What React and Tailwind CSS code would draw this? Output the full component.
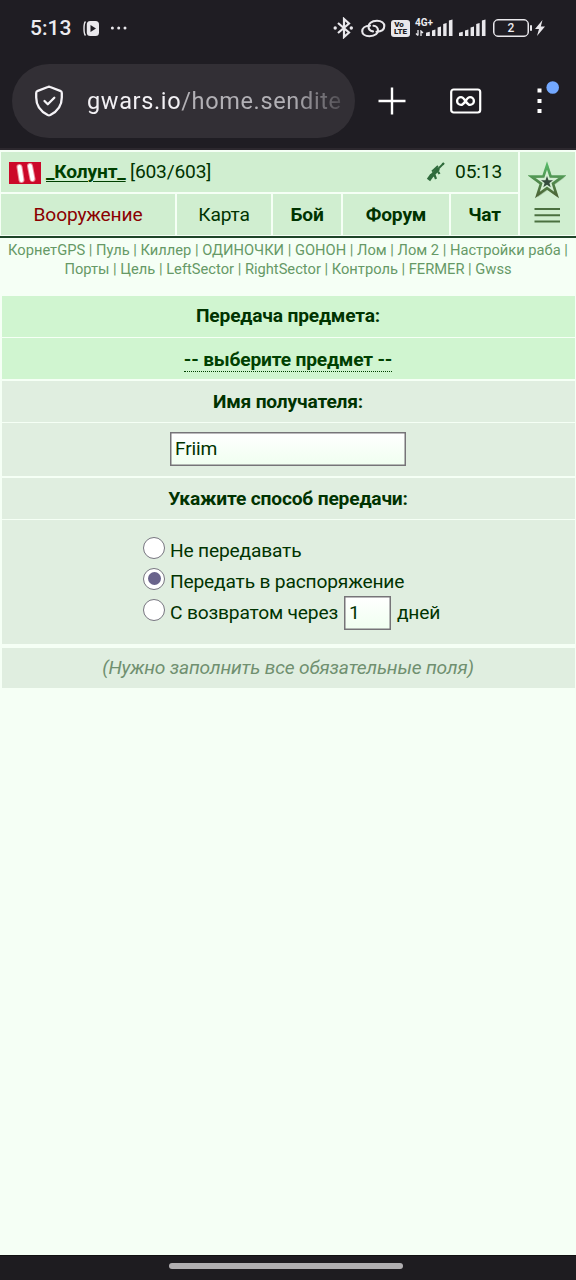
import React from "react";

function Bars({ className }) {
  return (
    <svg className={className} width="27" height="18" viewBox="0 0 27 18" fill="#e9e8ec">
      <path d="M0 17v-3.200L3.800 12.800v4.200zM6 11.500l3.400-1v6.500H6zM11.600 8.500L15 7.500v9.500h-3.400zM17.200 5L20.600 4v13h-3.400zM22.900 1.500l3.600-1v16.500h-3.600z" />
    </svg>
  );
}

function StatusBar() {
  return (
    <div className="flex h-14 items-center pl-[30px] text-[#ecebef]">
      <span className="w-[42px] whitespace-nowrap text-[21px] font-medium leading-6">5:13</span>
      <svg className="ml-[11px]" width="17" height="17" viewBox="0 0 17 17">
        <path d="M2.500 1.500C1 3 1 4 1 8.500s0 5.500 1.500 7" fill="none" stroke="#e9e8ec" strokeWidth="1.400" />
        <rect x="3.800" y="1" width="12.200" height="15" rx="3.500" fill="#e9e8ec" />
        <path d="M7.500 5v7l5.500-3.500z" fill="#1f1d23" />
      </svg>
      <svg className="ml-[10px]" width="18" height="4" viewBox="0 0 18 4" fill="#e9e8ec">
        <circle cx="2.400" cy="2" r="1.500" /><circle cx="8.700" cy="2" r="1.500" /><circle cx="15" cy="2" r="1.500" />
      </svg>
      <svg className="ml-[205px]" width="22" height="22" viewBox="0 0 22 22" fill="none" stroke="#e9e8ec" strokeWidth="2.200">
        <path d="M5 6l11 9.500-5 4.500V2l5 4.500L5 16" />
        <circle cx="2.200" cy="11" r="1.700" fill="#e9e8ec" stroke="none" /><circle cx="18.300" cy="11" r="1.700" fill="#e9e8ec" stroke="none" />
      </svg>
      <svg className="ml-[6px]" width="25" height="19" viewBox="0 0 25 19" fill="none" stroke="#e9e8ec" strokeWidth="2.100" strokeLinecap="round">
        <path d="M15.500 12.700C21 12.700 23.300 10 23.300 7S20.500 1.800 16 1.800C10 1.800 7.500 5 7.500 7.500S9.500 12 12 12.400" />
        <path d="M9 6.800C3.500 6.800 1.200 9.500 1.200 12.200S4 17.200 8.500 17.200C14.500 17.200 17 14 17 11.500S15 7 12.500 6.800" />
      </svg>
      <div className="ml-[5px] flex h-[17px] w-[19px] flex-col items-center justify-center rounded-[3px] bg-[#e9e8ec] text-[8px] font-black leading-[7px] text-[#1f1d23]">
        <span className="mr-[3px]">Vo</span><span>LTE</span>
      </div>
      <div className="relative ml-[5px] h-[18px] w-[38px]">
        <span className="absolute -top-px left-0 text-[10px] font-bold leading-[10px]">4G+</span>
        <svg className="absolute left-0 top-[11px]" width="10" height="7" viewBox="0 0 10 7" fill="none" stroke="#e9e8ec" strokeWidth="1.300">
          <path d="M3 0v5.500M1 3.500L3 5.500M6 6V1L8 3" />
        </svg>
        <Bars className="absolute left-[11px] top-0" />
      </div>
      <Bars className="ml-[6px]" />
      <div className="ml-[7px] flex h-[18px] w-[36px] items-center justify-center rounded-[5px] border border-[#e9e8ec] text-[12px] font-medium leading-none shadow-[inset_0_0_0_0.500px_#e9e8ec]">2</div>
      <span className="ml-px h-[6px] w-[2px] rounded-sm bg-[#e9e8ec]" />
      <svg className="ml-[2px]" width="12" height="18" viewBox="0 0 12 18" fill="#e9e8ec">
        <path d="M8.500 1L1 10h4l-2 7 8-9.500H6.800z" />
      </svg>
    </div>
  );
}

function BrowserBar() {
  return (
    <div className="flex h-[92px] items-start pl-3 pt-2">
      <div className="flex h-[74px] w-[343px] items-center rounded-full bg-[#322f35] pl-[21px]">
        <svg width="32" height="34" viewBox="0 0 32 34" fill="none" stroke="#f5f3f7" strokeWidth="2.300" strokeLinejoin="round" strokeLinecap="round">
          <path d="M14.800 3q1.200-.5 2.400 0l10 3.800q1.600.7 1.600 2.300v4.400c0 9-4.500 14-11.500 17.500q-1.300.6-2.600 0C7.700 27.500 3.200 22.500 3.200 13.500V9.100q0-1.600 1.600-2.300z" />
          <path d="M11.500 17l3.300 3.300 6.500-6.500" />
        </svg>
        <div className="ml-[22px] w-[256px] whitespace-nowrap text-[23.500px] leading-8 tracking-[0.650px] text-[#b2b0b5] [mask-image:linear-gradient(to_right,black_80%,rgba(0,0,0,0.2)_100%)]">
          <span className="text-[#f2f0f4]">gwars.io</span>/home.sendite
        </div>
      </div>
      <svg className="ml-[23px] mt-[23px]" width="28" height="28" viewBox="0 0 28 28" stroke="#fff" strokeWidth="2.400">
        <path d="M14 .5v27M.5 14h27" />
      </svg>
      <svg className="ml-[44px] mt-[24px]" width="32" height="26" viewBox="0 0 32 26" fill="none" stroke="#fff" strokeWidth="2.200">
        <rect x="1.200" y="1.500" width="29" height="23" rx="2.500" />
        <path d="M15.500 13c-2-3-3-3.900-4.500-3.900a3.900 3.900 0 0 0 0 7.800c1.500 0 2.500-.9 4.500-3.900s3-3.900 4.500-3.900a3.900 3.900 0 0 1 0 7.800c-1.500 0-2.500-.9-4.500-3.900z" strokeWidth="2.400" />
      </svg>
      <svg className="ml-[52px] mt-[16px]" width="28" height="34" viewBox="0 0 28 34" fill="#fff">
        <path d="M3.500 8.500h4v4h-4zM3.500 19h4v4h-4zM3.500 29h4v4h-4z" />
        <circle cx="18.700" cy="7.500" r="6.300" fill="#73a8ff" />
      </svg>
    </div>
  );
}

function Syndicate() {
  return (
    <svg width="32" height="22" viewBox="0 0 32 22">
      <rect width="32" height="22" fill="#cc0829" />
      <g strokeLinecap="round">
        <path d="M10.500 5l2 13M21 4l2.500 13" stroke="#ee8c9a" strokeWidth="6" />
        <path d="M10.500 5l2 13M21 4l2.500 13" stroke="#fff" strokeWidth="4" />
      </g>
    </svg>
  );
}

function Rifle() {
  return (
    <svg width="20" height="21" viewBox="0 0 20 21" fill="none" stroke="#2f6b3c">
      <path d="M2.500 18L6 13" strokeWidth="4" />
      <path d="M5.500 14L12.500 6.500" strokeWidth="4" />
      <path d="M11.500 7.500L17.500 1.500" strokeWidth="1.800" />
      <path d="M6 9.500L12 4" strokeWidth="1.800" />
      <path d="M16.500 1l1.500 1.500M8.500 13l1.500 4M12 9.500l1.500 2.500" strokeWidth="2.200" />
    </svg>
  );
}

function StarMenu() {
  return (
    <svg width="38" height="64" viewBox="0 0 38 64">
      <defs>
        <linearGradient id="star" x1="0" y1="0" x2="0" y2="1">
          <stop offset="0" stopColor="#55b565" /><stop offset="1" stopColor="#4d6638" />
        </linearGradient>
      </defs>
      <path d="M20 4l4 12 13 .2-10.500 7.800 4 12.500-10.500-7.500-10.500 7.500 4-12.500L3 16.200l13-.2z" fill="#a5c7a5" />
      <path d="M19 4.500L22.600 15.500 34.500 15.600 25 22.600 28.600 34 19 27.200 9.400 34 13 22.600 3.500 15.600 15.400 15.500z" fill="#d4eed3" stroke="url(#star)" strokeWidth="2.600" />
      <path d="M19 15l1.500 4.200 4.500.1-3.600 2.700 1.300 4.300-3.700-2.600-3.700 2.600 1.300-4.300-3.600-2.700 4.500-.1z" fill="#354b3d" />
      <path d="M6.500 48h25.500M6.500 54.300h25.500M6.500 60.500h25.500" stroke="#4b7040" strokeWidth="2" />
    </svg>
  );
}

const cell = "flex h-[41px] items-center justify-center bg-[#d0eed0] pt-px";

function GameHeader() {
  return (
    <div className="flex h-[88px] gap-[2px] border-b-2 border-[#1d4528] bg-[#f5fff5] pl-px pr-[1.500px] pt-[2px] text-[19.200px] tracking-[-0.180px]">
      <div className="flex w-[517px] flex-col gap-[2px]">
        <div className="flex h-[40px] items-center bg-[#d0eed0] pl-2 pt-px">
          <Syndicate />
          <span className="ml-[5px] w-[80px] whitespace-nowrap font-bold text-[#004000] underline decoration-1 underline-offset-[3px]">_Колунт_</span>
          <span className="ml-[4px]">[603/603]</span>
          <span className="ml-auto"><Rifle /></span>
          <span className="ml-[9px] mr-[16px]">05:13</span>
        </div>
        <div className="flex gap-[2px]">
          <div className={cell + " w-[174px] text-[#8b0000]"}>Вооружение</div>
          <div className={cell + " w-[94px]"}>Карта</div>
          <div className={cell + " w-[68px] font-bold"}>Бой</div>
          <div className={cell + " w-[106px] font-bold"}>Форум</div>
          <div className={cell + " w-[67px] font-bold"}>Чат</div>
        </div>
      </div>
      <div className="flex h-[83px] flex-1 items-start justify-center bg-[#d0eed0] pt-[9px]"><StarMenu /></div>
    </div>
  );
}

function Radio({ checked }) {
  return (
    <span className="mt-[-8px] flex size-[22px] shrink-0 items-center justify-center rounded-full border-[1.500px] border-[#777580] bg-white">
      {checked && <span className="size-[13px] rounded-full bg-[#69638b]" />}
    </span>
  );
}

const field = "flex h-[34px] shrink-0 items-center border border-[#767478] bg-linear-to-b from-white to-[#f0fff0] pl-[4px] pt-px shadow-[inset_0_0_0_0.500px_#767478]";

export default function App() {
  return (
    <div className="flex h-[1280px] w-[576px] flex-col overflow-hidden bg-[#f5fff5] font-['Roboto',sans-serif] text-[#003300]">
      <div className="h-[150px] shrink-0 border-b-2 border-[#2c282e] bg-[#1f1d23]">
        <StatusBar />
        <BrowserBar />
      </div>
      <GameHeader />
      <div className="h-[58px] whitespace-nowrap pt-[3px] text-center text-[14.700px] leading-[19px] text-[#669966]">
        <p>КорнетGPS | Пуль | Киллер | ОДИНОЧКИ | GOHOH | Лом | Лом 2 | Настройки раба |</p>
        <p>Порты | Цель | LeftSector | RightSector | Контроль | FERMER | Gwss</p>
      </div>
      <div className="mx-[1.500px] flex flex-col gap-[1.500px] text-[19.200px] tracking-[-0.180px] *:flex *:items-center *:justify-center">
        <div className="h-[40.500px] bg-[#d0f5d0] pt-px font-bold">Передача предмета:</div>
        <div className="h-[41px] bg-[#d0f5d0] pt-[2px] font-bold text-[#004000]">
          <span className="border-b-[1.500px] border-dotted border-[#004000] leading-[23px]">-- выберите предмет --</span>
        </div>
        <div className="h-[41px] bg-[#e0eee0] pt-[2px] font-bold">Имя получателя:</div>
        <div className="h-[53px] bg-[#e0eee0] pb-px">
          <div className={field + " w-[236px]"}>Friim</div>
        </div>
        <div className="h-[41px] bg-[#e0eee0] pt-[2px] font-bold">Укажите способ передачи:</div>
        <div className="h-[124px] bg-[#e0eee0]">
          <div className="flex w-[290px] flex-col pt-[1px]">
            <div className="flex h-[31px] items-center gap-[5px]"><Radio />Не передавать</div>
            <div className="flex h-[31px] items-center gap-[5px]"><Radio checked />Передать в распоряжение</div>
            <div className="flex h-[31px] items-center gap-[5px] whitespace-nowrap">
              <Radio />С возвратом через
              <div className={field + " -mt-px ml-px w-[47px]"}>1</div>
              <span className="ml-px">дней</span>
            </div>
          </div>
        </div>
        <div className="mt-[2px] h-[40px] bg-[#e0eee0] pt-px italic text-[#709070]">(Нужно заполнить все обязательные поля)</div>
      </div>
      <div className="mt-auto flex h-[25px] shrink-0 items-start justify-center border-t border-[#111] bg-[#1e1c20] pt-[7px]">
        <div className="mr-[4px] h-[6px] w-[234px] rounded-full bg-[#b1afb1]" />
      </div>
    </div>
  );
}
